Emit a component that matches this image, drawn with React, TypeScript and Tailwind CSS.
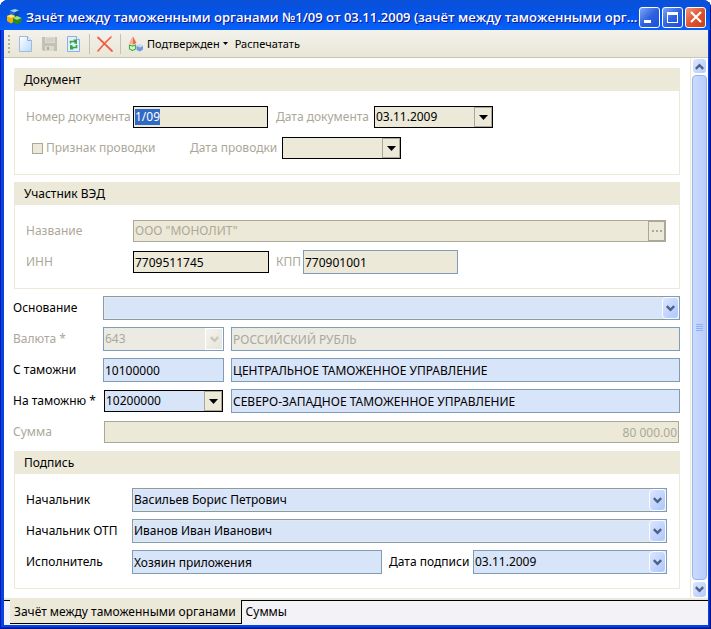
import { useEffect, useRef, type ReactNode } from "react";
import clsx from "clsx";

type Look = "blue" | "active" | "grey" | "dim" | "plain";

const boxLook: Record<Look, string> = {
  blue: "h-6 border-[#7f9db9] bg-[#d8e4f8] text-black",
  active: "h-[22px] mx-px border-black bg-[#ece9d8] text-black",
  grey: "h-6 border-[#7f9db9] bg-[#ebebe4] text-[#aca899]",
  dim: "h-[22px] mx-px border-[#aca899] bg-[#ece9d8] text-[#aca899]",
  plain: "h-6 border-[#7f9db9] bg-[#ece9d8] text-black",
};

function Chevron({ className }: { className?: string }) {
  return (
    <svg viewBox="0 0 9 7" className={clsx("h-[7px] w-[9px]", className)} fill="none" stroke="currentColor" strokeWidth="2.4">
      <path d="M.8 1.2 4.5 4.9 8.2 1.2" />
    </svg>
  );
}

function ClassicArrow() {
  return (
    <svg viewBox="0 0 9 5" className="h-[5px] w-[9px]" fill="#000">
      <path d="M0 0h9L4.5 5z" />
    </svg>
  );
}

type BoxProps = { id: string; value: string; look: Look; className?: string; label?: string; disabled?: boolean; right?: boolean };

function Field({ id, value, look, className, label, disabled, right }: BoxProps) {
  return (
    <div className={clsx("flex min-w-0 border", boxLook[look], className)}>
      <input
        id={id}
        aria-label={label}
        defaultValue={value}
        disabled={disabled}
        className={clsx("h-full w-full min-w-0 bg-transparent px-px outline-none", right && "text-right")}
      />
    </div>
  );
}

type ComboProps = BoxProps & { arrow: "classic" | "xp" | "off"; framed?: boolean; blueFill?: boolean };

function Combo({ id, value, look, className, disabled, arrow, framed, blueFill }: ComboProps) {
  return (
    <div className={clsx("relative min-w-0 border", boxLook[look], className, blueFill && "bg-[#d8e4f8]!")}>
      <select
        id={id}
        disabled={disabled}
        defaultValue={value}
        className={clsx(
          "h-full w-full appearance-none bg-transparent pr-5 opacity-100 outline-none",
          framed ? "border border-[#ece9d8]" : "pl-px",
        )}
      >
        <option>{value}</option>
      </select>
      <span
        className={clsx(
          "pointer-events-none absolute inset-y-0 right-0 flex items-center justify-center",
          arrow === "classic" && "w-[18px] border border-[#aca899] bg-[#ece9d8]",
          arrow === "xp" && "w-[17px] rounded-sm border border-[#fbfcff] bg-linear-to-br from-[#dbe5ff] to-[#adc6fb] text-[#4d6185]",
          arrow === "off" && "w-[18px] border border-white bg-linear-to-br from-[#f4f4ee] to-[#e5e4dc] text-[#c9c7ba]",
        )}
      >
        {arrow === "classic" ? <ClassicArrow /> : <Chevron />}
      </span>
    </div>
  );
}

function Label({ htmlFor, dim, className, children }: { htmlFor: string; dim?: boolean; className?: string; children: ReactNode }) {
  return (
    <label htmlFor={htmlFor} className={clsx("shrink-0 whitespace-nowrap", dim && "text-[#aca899]", className)}>
      {children}
    </label>
  );
}

function Row({ children }: { children: ReactNode }) {
  return <div className="flex h-6 items-center">{children}</div>;
}

function Group({ title, children }: { title: string; children: ReactNode }) {
  return (
    <section className="border border-t-0 border-[#ece9d8]">
      <h2 className="-mx-px h-[23px] bg-[#ece9d8] pl-2.5 leading-[23px]">{title}</h2>
      <div className="flex flex-col gap-[7px] py-3.5 pr-3 pl-[11px]">{children}</div>
    </section>
  );
}

function CaptionButton({ label, close, children }: { label: string; close?: boolean; children: ReactNode }) {
  return (
    <button
      type="button"
      aria-label={label}
      className={clsx(
        "flex size-[21px] items-center justify-center rounded-[3px] border border-white",
        close ? "bg-linear-to-br from-[#f0957c] via-[#e0522c] to-[#c8401a]" : "bg-linear-to-br from-[#7fa5f5] via-[#2f62e0] to-[#1c4fd6]",
      )}
    >
      {children}
    </button>
  );
}

function AppIcon() {
  return (
    <svg viewBox="0 0 16 16" className="size-4 shrink-0">
      <path d="M3 1.500 8 0l4 1.500v5L7.500 9 3 7z" fill="#1a6fd0" />
      <path d="M3 1.500 8 0l4 1.500L7.500 3.500z" fill="#9ad0fa" />
      <path d="M7.500 3.500 12 1.500v5L7.500 9z" fill="#0d4a9c" />
      <path d="M0 7l4-1.500L8 7v5l-4 2.500L0 12z" fill="#f2b100" />
      <path d="M0 7l4-1.500L8 7 4 9z" fill="#ffe87a" />
      <path d="M6 9l4-2 4.500 2v4L10 15.500 6 13z" fill="#2c8a1c" />
      <path d="M6 9l4-2 4.500 2L10 11z" fill="#9be27c" />
    </svg>
  );
}

function NewIcon() {
  return (
    <svg viewBox="0 0 16 16" className="size-4">
      <defs>
        <linearGradient id="sheet" x1="0" y1="0" x2="1" y2="1">
          <stop offset="0" stopColor="#fff" />
          <stop offset="1" stopColor="#b9d8fa" />
        </linearGradient>
      </defs>
      <path d="M1.500.5h8l4 4v11h-12z" fill="url(#sheet)" stroke="#9dbbe3" />
      <path d="M9.500.5v4h4" fill="#dcebfc" stroke="#86aee0" />
    </svg>
  );
}

function SaveIcon() {
  return (
    <svg viewBox="0 0 16 16" className="size-4">
      <path d="M0 1h15v14H1.500L0 13.500z" fill="#c3c1b4" />
      <path d="M3 1h10v6H3z" fill="#dedcd0" />
      <path d="M4 3h8M4 5h8" stroke="#c9c7ba" />
      <path d="M3 10h9v5H3z" fill="#dbd9cd" />
      <path d="M5 11h2v3H5z" fill="#aeac9f" />
    </svg>
  );
}

function RefreshIcon() {
  return (
    <svg viewBox="0 0 16 16" className="size-4">
      <path d="M1.500.5h9l3 3v12h-12z" fill="#e3effd" stroke="#8eafe0" />
      <path d="M10.500.5v3h3" fill="#fff" stroke="#8eafe0" />
      <path d="M4.500 7.500V5.500h3.500" fill="none" stroke="#2fa643" strokeWidth="1.600" />
      <path d="M7.500 3.500H11V8L8.500 7.500z" fill="#2fa643" />
      <path d="M10.500 9v2.500H7" fill="none" stroke="#2fa643" strokeWidth="1.600" />
      <path d="M7.500 13.500H4V9l2.500.5z" fill="#2fa643" />
    </svg>
  );
}

function DeleteIcon() {
  return (
    <svg viewBox="0 0 16 16" className="size-4" fill="none" stroke="#ef5f44" strokeLinecap="round">
      <path d="M1 1.500 15 15" strokeWidth="1.800" />
      <path d="M14 1 7.500 7.500 1 15" strokeWidth="1.600" />
    </svg>
  );
}

function ShapesIcon() {
  return (
    <svg viewBox="0 0 16 16" className="size-4">
      <path d="M5 .5 8.500 7 5 8.500 1.500 7z" fill="#ee6a4c" />
      <path d="M5 .5 5 8.500 1.500 7z" fill="#f9b09c" />
      <path d="M1.500 9l3 1 3-1v4l-3 1.500-3-1.500z" fill="#dff5d8" stroke="#4cb043" strokeWidth="1.200" />
      <path d="M8.500 10l3-1.500L15 10v3.500l-3 2-3.500-1.500z" fill="#6d9be0" />
      <path d="M8.500 10l3-1.500L15 10l-3 1.500z" fill="#c9defa" />
    </svg>
  );
}

export default function App() {
  const numberRef = useRef<HTMLInputElement>(null);

  useEffect(() => {
    numberRef.current?.focus();
    numberRef.current?.select();
  }, []);

  return (
    <div className="flex min-h-screen flex-col overflow-hidden rounded-t-lg bg-[#0842e0] font-['Noto_Sans',sans-serif] text-[12px] leading-4 text-black shadow-[inset_1px_0_0_#0019b4,inset_-1px_-1px_0_#00138c,inset_-2px_-2px_0_#0029c0]">
      <header className="mr-px flex h-[30px] items-center bg-linear-to-b from-[#0a50d8] via-[#0353e8] to-[#0661fb] pt-1 pr-1 pl-[7px]">
        <AppIcon />
        <h1 className="ml-[3px] min-w-0 flex-1 overflow-hidden font-['Open_Sans',sans-serif] text-[13px] font-semibold whitespace-nowrap text-white [text-shadow:1px_1px_#0f1089]">
          Зачёт между таможенными органами №1/09 от 03.11.2009 (зачёт между таможенными орг...
        </h1>
        <div className="flex gap-0.5">
          <CaptionButton label="Свернуть">
            <span className="mt-2 mr-1 h-[3px] w-[7px] bg-white" />
          </CaptionButton>
          <CaptionButton label="Развернуть">
            <span className="size-[11px] border border-t-[3px] border-white" />
          </CaptionButton>
          <CaptionButton label="Закрыть" close>
            <svg viewBox="0 0 12 12" className="size-3" stroke="#fff" strokeWidth="2.200">
              <path d="M1 1l10 10M11 1 1 11" />
            </svg>
          </CaptionButton>
        </div>
      </header>

      <div className="mr-[3px] mb-1 ml-1 flex flex-1 flex-col bg-white">
        <div className="flex h-7 items-center border-b border-[#c9c6b4] bg-linear-to-b from-[#f3f2ec] to-[#e9e6d6] pl-1 text-[11px]">
          <span className="flex flex-col gap-0.5">
            <i className="size-0.5 bg-[#b3b0a0]" />
            <i className="size-0.5 bg-[#b3b0a0]" />
            <i className="size-0.5 bg-[#b3b0a0]" />
            <i className="size-0.5 bg-[#b3b0a0]" />
            <i className="size-0.5 bg-[#b3b0a0]" />
          </span>
          <button type="button" aria-label="Создать" className="ml-2">
            <NewIcon />
          </button>
          <button type="button" aria-label="Сохранить" disabled className="ml-2">
            <SaveIcon />
          </button>
          <button type="button" aria-label="Обновить" className="ml-2">
            <RefreshIcon />
          </button>
          <span className="ml-[7px] h-5 w-px bg-[#c5c2b1]" />
          <button type="button" aria-label="Удалить" className="ml-[7px]">
            <DeleteIcon />
          </button>
          <span className="ml-[7px] h-5 w-px bg-[#c5c2b1]" />
          <button type="button" className="ml-[7px] flex items-center gap-[3px]">
            <ShapesIcon />
            <span>Подтвержден</span>
            <svg viewBox="0 0 5 3" className="h-[3px] w-[5px]">
              <path d="M0 0h5L2.500 3z" />
            </svg>
          </button>
          <button type="button" className="ml-[7px]">
            Распечатать
          </button>
        </div>

        <div className="flex flex-1">
          <main className="flex min-w-0 flex-1 flex-col gap-[7px] px-2.5 pt-2.5 pb-2">
            <Group title="Документ">
              <Row>
                <Label htmlFor="number" dim className="w-[106px]">
                  Номер документа
                </Label>
                <div className="mx-px flex h-[22px] w-[135px] items-center border border-black bg-[#ece9d8]">
                  <input
                    id="number"
                    ref={numberRef}
                    defaultValue="1/09"
                    className="w-full bg-transparent px-px outline-none selection:bg-[#316ac5] selection:text-white"
                  />
                </div>
                <Label htmlFor="date" dim className="ml-[7px] w-[97px]">
                  Дата документа
                </Label>
                <Combo id="date" value="03.11.2009" look="active" arrow="classic" className="w-[119px]" />
              </Row>
              <Row>
                <label className="ml-1.5 flex w-[158px] items-center gap-[3px] text-[#aca899]">
                  <input type="checkbox" disabled className="size-[11px] appearance-none border border-[#aca899] bg-[#ece9d8]" />
                  Признак проводки
                </label>
                <Label htmlFor="posting" dim className="w-[91px]">
                  Дата проводки
                </Label>
                <Combo id="posting" value="" look="active" arrow="classic" className="w-[119px]" />
              </Row>
            </Group>

            <Group title="Участник ВЭД">
              <Row>
                <Label htmlFor="name" dim className="w-[106px]">
                  Название
                </Label>
                <div className="mx-px flex h-[22px] min-w-0 flex-1 border border-[#aca899] bg-[#ece9d8] text-[#aca899]">
                  <input id="name" disabled defaultValue={'ООО "МОНОЛИТ"'} className="min-w-0 flex-1 bg-transparent px-px" />
                  <button
                    type="button"
                    aria-label="Выбрать"
                    disabled
                    className="flex w-[17px] items-center justify-center gap-0.5 border border-[#aca899]"
                  >
                    <i className="size-0.5 bg-[#aca899]" />
                    <i className="size-0.5 bg-[#aca899]" />
                    <i className="size-0.5 bg-[#aca899]" />
                  </button>
                </div>
              </Row>
              <Row>
                <Label htmlFor="inn" dim className="w-[106px]">
                  ИНН
                </Label>
                <Field id="inn" value="7709511745" look="active" className="w-[136px]" />
                <Label htmlFor="kpp" dim className="ml-1.5 w-[27px]">
                  КПП
                </Label>
                <Field id="kpp" value="770901001" look="plain" className="w-[155px]" />
              </Row>
            </Group>

            <div className="-ml-px flex flex-col gap-[7px]">
              <Row>
                <Label htmlFor="basis" className="w-[90px]">
                  Основание
                </Label>
                <Combo id="basis" value="" look="blue" arrow="xp" framed className="flex-1" />
              </Row>
              <Row>
                <Label htmlFor="currency" dim className="w-[90px]">
                  Валюта *
                </Label>
                <Combo id="currency" value="643" look="grey" arrow="off" disabled className="w-[121px]" />
                <Field id="currency-name" label="Название валюты" value="РОССИЙСКИЙ РУБЛЬ" look="grey" disabled className="ml-[7px] flex-1" />
              </Row>
              <Row>
                <Label htmlFor="from" className="w-[90px]">
                  С таможни
                </Label>
                <Field id="from" value="10100000" look="blue" className="w-[121px]" />
                <Field id="from-name" label="Название таможни" value="ЦЕНТРАЛЬНОЕ ТАМОЖЕННОЕ УПРАВЛЕНИЕ" look="blue" className="ml-[7px] flex-1" />
              </Row>
              <Row>
                <Label htmlFor="to" className="w-[90px]">
                  На таможню *
                </Label>
                <Combo id="to" value="10200000" look="active" arrow="classic" blueFill className="w-[119px]" />
                <Field id="to-name" label="Название таможни" value="СЕВЕРО-ЗАПАДНОЕ ТАМОЖЕННОЕ УПРАВЛЕНИЕ" look="blue" className="ml-[7px] flex-1" />
              </Row>
              <Row>
                <Label htmlFor="sum" dim className="w-[90px]">
                  Сумма
                </Label>
                <Field id="sum" value="80 000.00" look="dim" disabled right className="flex-1" />
              </Row>
            </div>

            <Group title="Подпись">
              <Row>
                <Label htmlFor="chief" className="w-[106px]">
                  Начальник
                </Label>
                <Combo id="chief" value="Васильев Борис Петрович" look="blue" arrow="xp" framed className="flex-1" />
              </Row>
              <Row>
                <Label htmlFor="chief-otp" className="w-[106px]">
                  Начальник ОТП
                </Label>
                <Combo id="chief-otp" value="Иванов Иван Иванович" look="blue" arrow="xp" framed className="flex-1" />
              </Row>
              <Row>
                <Label htmlFor="executor" className="w-[106px]">
                  Исполнитель
                </Label>
                <Field id="executor" value="Хозяин приложения" look="blue" className="flex-1" />
                <Label htmlFor="sign-date" className="ml-[7px] w-[84px]">
                  Дата подписи
                </Label>
                <Combo id="sign-date" value="03.11.2009" look="blue" arrow="xp" className="w-[194px]" />
              </Row>
            </Group>
          </main>

          <aside className="flex w-[18px] flex-col items-center border-l border-[#ece9d8] bg-[#fdfdfa] text-[#4d6185]">
            <button
              type="button"
              aria-label="Вверх"
              className="flex h-4 w-[15px] items-center justify-center rounded-sm border border-white bg-linear-to-br from-[#dbe5ff] to-[#b5cbfb]"
            >
              <Chevron className="rotate-180" />
            </button>
            <div className="mt-px flex w-[15px] flex-1 flex-col items-center justify-center gap-px rounded-sm border border-[#98b4ee] bg-linear-to-r from-[#cbdbff] to-[#b8cdfb]">
              <i className="h-px w-[7px] bg-[#8cb0f8]" />
              <i className="h-px w-[7px] bg-[#8cb0f8]" />
              <i className="h-px w-[7px] bg-[#8cb0f8]" />
              <i className="h-px w-[7px] bg-[#8cb0f8]" />
            </div>
            <button
              type="button"
              aria-label="Вниз"
              className="mt-px flex h-[17px] w-[15px] items-center justify-center rounded-sm border border-white bg-linear-to-br from-[#dbe5ff] to-[#b5cbfb]"
            >
              <Chevron />
            </button>
          </aside>
        </div>

        <nav className="border-t-2 border-[#ece9d8] bg-[#f3f2f7]">
          <div className="flex h-[25px] border-t border-black pl-1.5">
            <button type="button" className="-mt-px h-6 border-r border-b border-black bg-[#ece9d8] pr-[5px] pl-1">
              Зачёт между таможенными органами
            </button>
            <button type="button" className="h-[22px] px-1">
              Суммы
            </button>
          </div>
        </nav>
      </div>
    </div>
  );
}
